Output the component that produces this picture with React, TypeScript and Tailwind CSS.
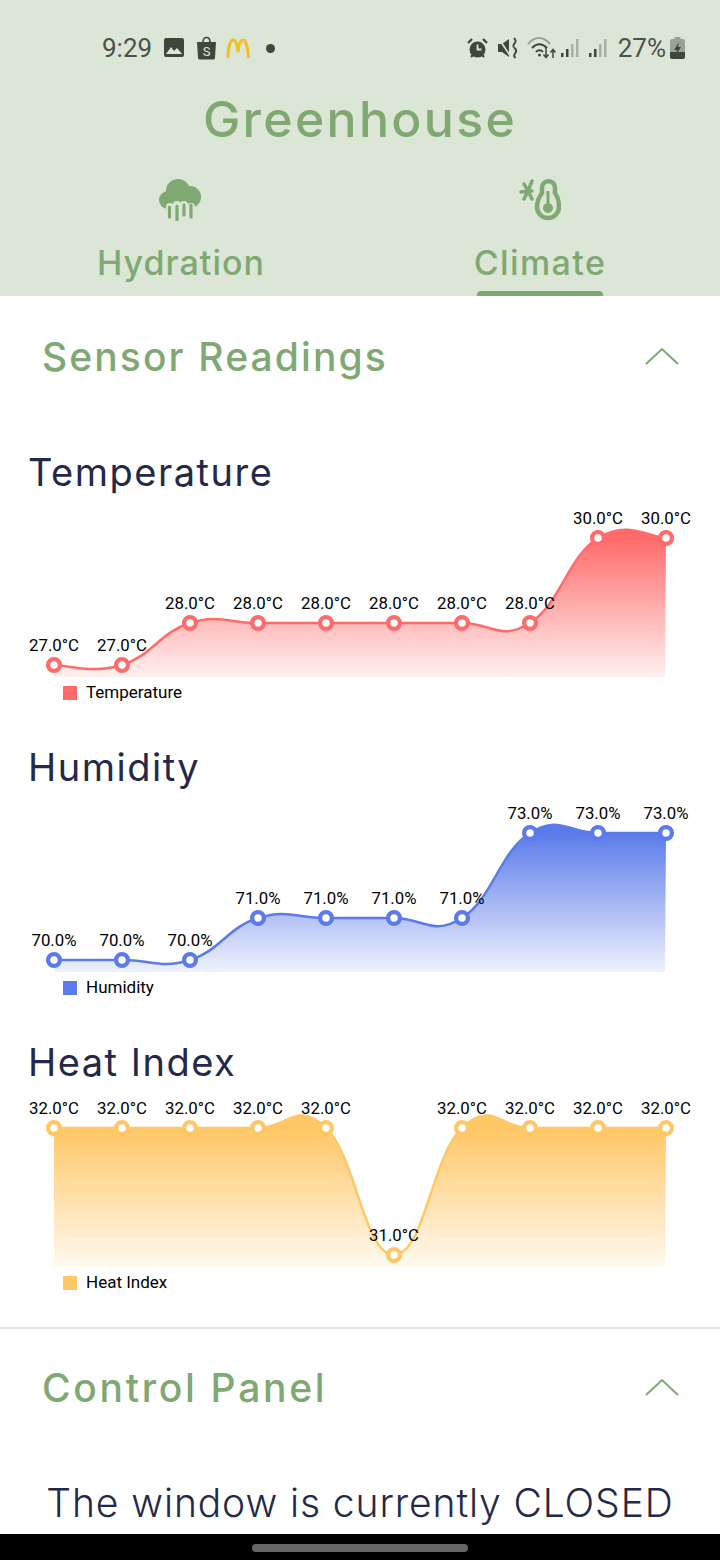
const dataSets = [
  {
    title: "Temperature",
    color: "#ff6b6b",
    gradientId: "tempFill",
    unit: "°C",
    values: [27, 27, 28, 28, 28, 28, 28, 28, 30, 30],
    ys: [160, 160, 118, 118, 118, 118, 118, 118, 33, 33],
    top: 33,
  },
  {
    title: "Humidity",
    color: "#5b7bea",
    gradientId: "humFill",
    unit: "%",
    values: [70, 70, 70, 71, 71, 71, 71, 73, 73, 73],
    ys: [160, 160, 160, 118, 118, 118, 118, 33, 33, 33],
    top: 33,
  },
  {
    title: "Heat Index",
    color: "#ffc766",
    gradientId: "heatFill",
    unit: "°C",
    values: [32, 32, 32, 32, 32, 31, 32, 32, 32, 32],
    ys: [33, 33, 33, 33, 33, 160, 33, 33, 33, 33],
    top: 33,
  },
];

const xs = [54, 122, 190, 258, 326, 394, 462, 530, 598, 666];
const BASE = 172;

function curve(ys: number[]) {
  const k = 0.22;
  let d = `M${xs[0]},${ys[0]}`;
  for (let i = 0; i < ys.length - 1; i++) {
    const px = xs[Math.max(i - 1, 0)];
    const py = ys[Math.max(i - 1, 0)];
    const nx = xs[Math.min(i + 2, ys.length - 1)];
    const ny = ys[Math.min(i + 2, ys.length - 1)];
    const c1x = xs[i] + (xs[i + 1] - px) * k;
    const c1y = ys[i] + (ys[i + 1] - py) * k;
    const c2x = xs[i + 1] - (nx - xs[i]) * k;
    const c2y = ys[i + 1] - (ny - ys[i]) * k;
    d += ` C${c1x},${c1y} ${c2x},${c2y} ${xs[i + 1]},${ys[i + 1]}`;
  }
  return d;
}

function Chart({ set }: { set: (typeof dataSets)[number] }) {
  const line = curve(set.ys);
  return (
    <svg width="720" height="175" className="block">
      <defs>
        <linearGradient id={set.gradientId} x1="0" y1={set.top} x2="0" y2={BASE} gradientUnits="userSpaceOnUse">
          <stop offset="0" stopColor={set.color} stopOpacity="1" />
          <stop offset="1" stopColor={set.color} stopOpacity="0.1" />
        </linearGradient>
      </defs>
      <path d={`${line} L665,${BASE} L54,${BASE} Z`} fill={`url(#${set.gradientId})`} />
      <path d={line} fill="none" stroke={set.color} strokeWidth="2.5" />
      {set.ys.map((y, i) => (
        <g key={i}>
          <circle cx={xs[i]} cy={y} r="5.900" fill="#fff" stroke={set.color} strokeWidth="4.300" />
          <text
            x={xs[i]}
            y={y - 14}
            textAnchor="middle"
            fontSize="16.800"
            fill="#000"
            style={{ fontFamily: "Roboto, sans-serif" }}
          >
            {set.values[i].toFixed(1)}
            {set.unit}
          </text>
        </g>
      ))}
    </svg>
  );
}

function Chevron() {
  return (
    <svg width="34" height="18" viewBox="0 0 34 18" fill="none" stroke="#7fa873" strokeWidth="2" className="-mt-[3px]">
      <path d="M1 17 L17 2 L33 17" />
    </svg>
  );
}

function StatusLeft() {
  return (
    <div className="flex items-center">
      <span className="font-['Roboto',sans-serif] text-[26px] leading-none text-[#4a5249] w-[62px]">9:29</span>
      <svg width="20" height="20" viewBox="0 0 20 20">
        <rect width="20" height="19" x="0" y="0" rx="2" fill="#3f463e" />
        <path d="M2 16 L7 9 L10 13 L13 10 L18 16 Z" fill="#dce6d6" />
      </svg>
      <svg width="21" height="24" viewBox="0 0 21 24" className="ml-[12px]">
        <path d="M7 6 C7 0 14 0 14 6" fill="none" stroke="#3f463e" strokeWidth="1.6" />
        <path d="M1 6 H20 L19 22 Q19 23.5 17 23.5 H4 Q2 23.5 2 22 Z" fill="#3f463e" />
        <text x="10.5" y="20" textAnchor="middle" fontSize="13" fill="#dce6d6" style={{ fontFamily: "Roboto, sans-serif" }}>
          S
        </text>
      </svg>
      <svg width="24" height="21" viewBox="0 0 24 21" className="ml-[9px]">
        <path
          d="M2 20 C2 10 4 2 7 2 C10 2 11.5 9 12 14 C12.5 9 14 2 17 2 C20 2 22 10 22.5 20"
          fill="none"
          stroke="#f3c11e"
          strokeWidth="3"
        />
      </svg>
      <span className="ml-[16px] w-[9px] h-[9px] rounded-full bg-[#3f463e]" />
    </div>
  );
}

function StatusRight() {
  return (
    <div className="flex items-center">
      <svg width="21" height="21" viewBox="0 0 21 21">
        <circle cx="10.5" cy="11.5" r="8" fill="#3f463e" />
        <path d="M10.5 6.5 V11.5 H14.5" fill="none" stroke="#dce6d6" strokeWidth="1.8" />
        <path d="M1 5 L5 1 M20 5 L16 1 M4 19 L6 17 M17 19 L15 17" stroke="#3f463e" strokeWidth="2.4" />
      </svg>
      <svg width="22" height="22" viewBox="0 0 22 22" className="ml-[9px]">
        <path d="M1 7 H5 L12 2 V20 L5 15 H1 Z" fill="#3f463e" />
        <path d="M2 2 L14 20" stroke="#dce6d6" strokeWidth="1.6" />
        <path d="M17 1 Q20 4 17.5 6.5 Q15 9 18 11.5 Q20.5 14 18 16.5 Q16 19 18.5 21" fill="none" stroke="#3f463e" strokeWidth="1.8" />
      </svg>
      <svg width="29" height="22" viewBox="0 0 29 22" fill="none" className="ml-[8px]">
        <path d="M1 7 C8 -1 16 -1 23 7" stroke="#9aa295" strokeWidth="2" />
        <path d="M5 11 C10 6 15 6 20 11" stroke="#3f463e" strokeWidth="2" />
        <path d="M9 15 C11 12.500 14 12.500 16 15" stroke="#3f463e" strokeWidth="2" />
        <circle cx="12.500" cy="18" r="1.500" fill="#3f463e" />
        <path d="M19 11 V20 M16.500 17.500 L19 20.500 L21.500 17.500" stroke="#3f463e" strokeWidth="1.500" />
        <path d="M26 21 V13 M23.500 15.500 L26 12.500 L28.500 15.500" stroke="#3f463e" strokeWidth="1.500" />
      </svg>
      <Signal className="ml-[5px]" />
      <Signal className="ml-[10px]" />
      <span className="ml-[11px] font-['Roboto',sans-serif] text-[26px] leading-none text-[#4a5249]">27%</span>
      <svg width="15" height="22" viewBox="0 0 15 22" className="ml-[4px]">
        <rect x="4.500" y="0" width="6" height="3" fill="#9aa295" />
        <rect x="0" y="2" width="15" height="20" rx="2" fill="#9aa295" />
        <path d="M0 15 H15 V20 Q15 22 13 22 H2 Q0 22 0 20 Z" fill="#3f463e" />
        <path d="M9 5 L4 13 H7 L6 18 L11 10 H8 Z" fill="#3f463e" />
      </svg>
    </div>
  );
}

function Signal({ className }: { className?: string }) {
  return (
    <svg width="18" height="20" viewBox="0 0 18 20" className={className}>
      <rect x="0" y="15" width="2.500" height="4" fill="#3f463e" />
      <rect x="5" y="11" width="2.500" height="8" fill="#3f463e" />
      <rect x="10" y="6" width="2.500" height="13" fill="#a9b0a3" />
      <rect x="15" y="1" width="2.500" height="18" fill="#a9b0a3" />
    </svg>
  );
}

function RainIcon() {
  return (
    <svg width="42" height="42" viewBox="0 0 42 42">
      <circle cx="9" cy="21" r="9" fill="#7fa873" />
      <circle cx="19" cy="12" r="12" fill="#7fa873" />
      <circle cx="31" cy="18" r="11" fill="#7fa873" />
      <rect x="9" y="16" width="24" height="16" fill="#7fa873" />
      <g stroke="#dce6d6" strokeWidth="8" strokeLinecap="round">
        <path d="M11 28 V40 M32 28 V40" />
        <path d="M18 26 V40 M25 26 V40" />
      </g>
      <g stroke="#7fa873" strokeWidth="3.200" strokeLinecap="round">
        <path d="M10.500 28 V38 M32 26 V38" />
        <path d="M18 27 V41 M25 26 V36" />
      </g>
    </svg>
  );
}

function ClimateIcon() {
  return (
    <svg width="42" height="42" viewBox="0 0 42 42" fill="none">
      <path
        d="M23 9 C23 0 36 0 36 9 V14 C39 18 40 22 40 28 A11 11 0 0 1 18 28 C18 22 20 18 23 14 Z"
        stroke="#7fa873"
        strokeWidth="4.500"
      />
      <path d="M29 12 V28" stroke="#7fa873" strokeWidth="3" />
      <circle cx="29" cy="29" r="5" fill="#7fa873" />
      <g stroke="#7fa873" strokeWidth="3.500" strokeLinecap="round">
        <path d="M9 12 L2 13 M9 12 L5 5 M9 12 L13 2 M9 12 L5 20 M9 12 L13 20 M9 12 L13 12" />
      </g>
    </svg>
  );
}

export default function App() {
  return (
    <div className="w-[720px] h-[1560px] bg-white flex flex-col overflow-hidden font-['Inter',sans-serif]">
      <header className="h-[296px] shrink-0 bg-[#dce6d6] flex flex-col">
        <div className="h-[94px] shrink-0 pl-[102px] pr-[35px] pt-[35px] flex items-start justify-between">
          <StatusLeft />
          <StatusRight />
        </div>
        <h1 className="text-center text-[50px] leading-[50px] font-medium tracking-[2.300px] text-[#7fa873]">Greenhouse</h1>
        <div className="flex mt-[35px]">
          <div className="w-[360px] flex flex-col items-center">
            <RainIcon />
            <span className="mt-[20px] ml-[2px] text-[34px] leading-[44px] tracking-[1px] text-[#7fa873] font-medium">Hydration</span>
          </div>
          <div className="w-[360px] flex flex-col items-center">
            <ClimateIcon />
            <span className="mt-[20px] text-[34px] leading-[44px] tracking-[1.400px] text-[#7fa873] font-medium">Climate</span>
            <div className="w-[126px] h-[5px] rounded-t-[4px] bg-[#7fa873] mt-[6px]" />
          </div>
        </div>
      </header>

      <main className="flex-1 min-h-0 overflow-hidden">
        <section className="h-[1033px] border-b-2 border-[#e0e4dc]">
          <div className="h-[122px] pl-[42px] pr-[41px] flex items-center justify-between">
            <h2 className="text-[39px] tracking-[2.100px] text-[#7fa873] font-medium">Sensor Readings</h2>
            <Chevron />
          </div>
          <div className="pt-[27px]">
            {dataSets.map((set) => (
              <div key={set.title} className="h-[295px]">
                <h3 className="h-[60px] pb-[6px] pl-[28px] flex items-center text-[38px] tracking-[1.500px] text-[#24294a]">{set.title}</h3>
                <Chart set={set} />
                <div className="h-[26px] flex items-center pl-[63px]">
                  <span className="w-[14px] h-[14px]" style={{ backgroundColor: set.color }} />
                  <span className="ml-[9px] font-['Roboto',sans-serif] text-[17px] text-black">{set.title}</span>
                </div>
              </div>
            ))}
          </div>
        </section>
        <section>
          <div className="h-[118px] pl-[42px] pr-[41px] flex items-center justify-between">
            <h2 className="text-[39px] tracking-[2.700px] text-[#7fa873] font-medium">Control Panel</h2>
            <Chevron />
          </div>
          <p className="text-center text-[39px] leading-[56px] tracking-[0.900px] text-[#24294a] mt-[28px] font-light">The window is currently CLOSED</p>
        </section>
      </main>

      <div className="h-[26px] shrink-0 bg-black flex justify-center pt-[10px]">
        <div className="w-[216px] h-[8px] rounded-full bg-[#666]" />
      </div>
    </div>
  );
}
